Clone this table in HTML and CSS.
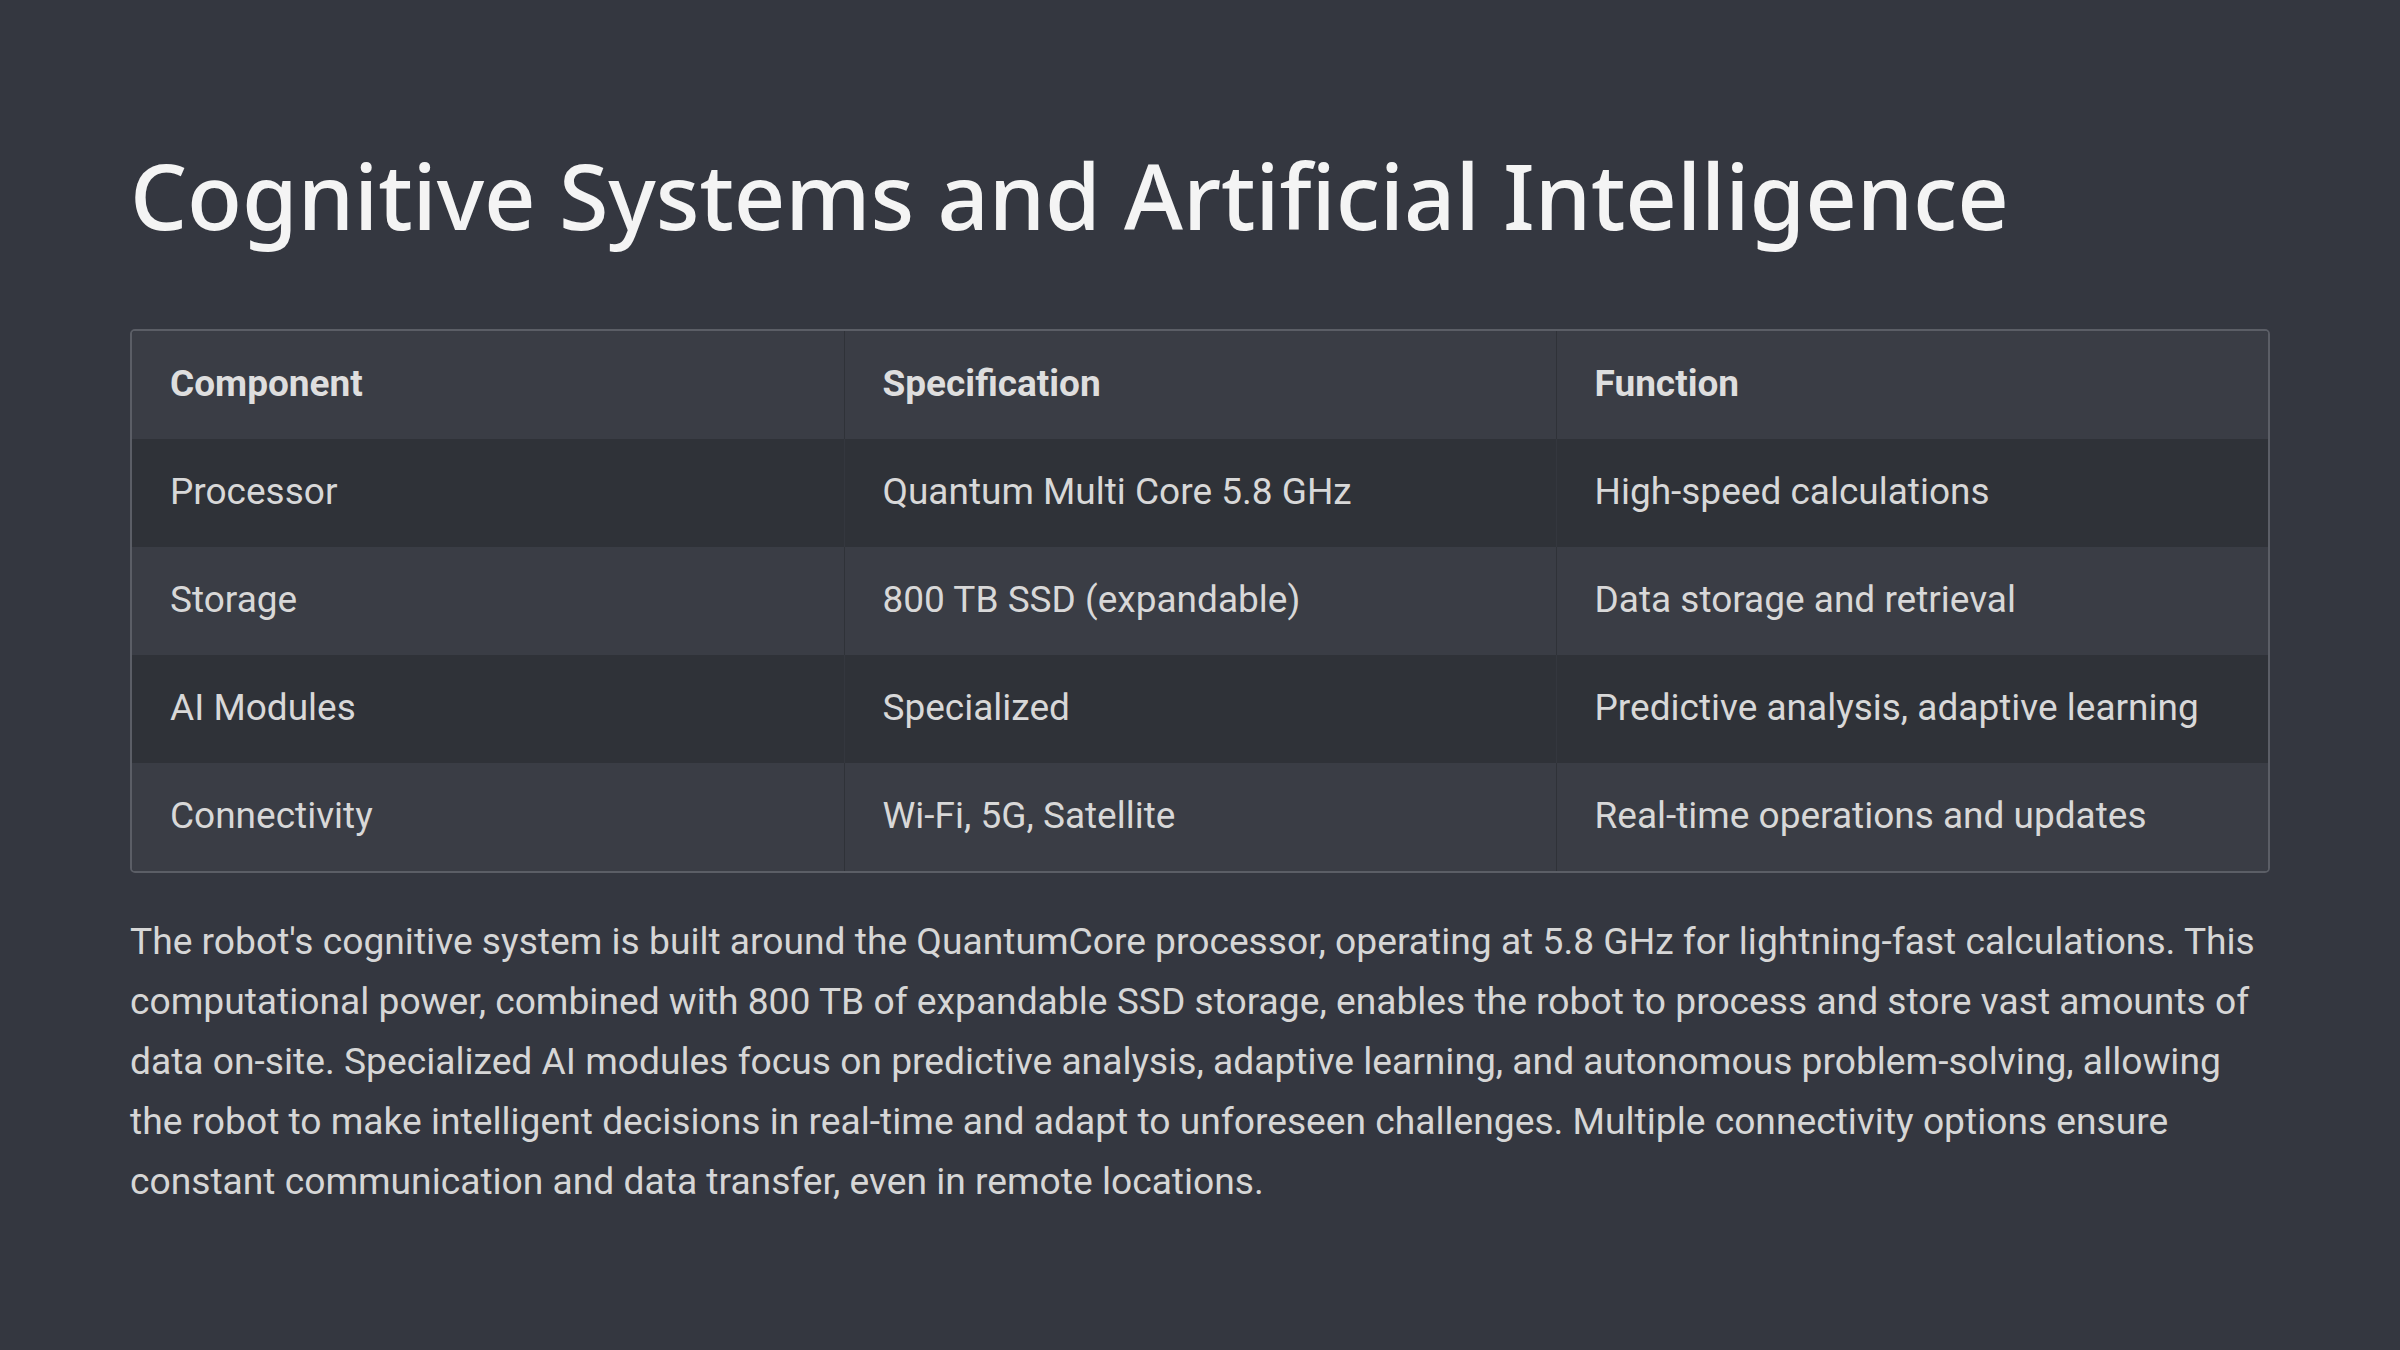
FILE: index.html
```html
<!DOCTYPE html>
<html lang="en">
<head>
<meta charset="utf-8">
<title>Cognitive Systems and Artificial Intelligence</title>
<link rel="stylesheet" href="styles.css">
</head>
<body>
<main class="slide">
  <h1 class="title">Cognitive Systems and Artificial Intelligence</h1>
  <div class="table-wrap">
    <table class="spec">
      <thead>
        <tr><th>Component</th><th>Specification</th><th>Function</th></tr>
      </thead>
      <tbody>
        <tr><td>Processor</td><td>Quantum Multi Core 5.8 GHz</td><td>High-speed calculations</td></tr>
        <tr><td>Storage</td><td>800 TB SSD (expandable)</td><td>Data storage and retrieval</td></tr>
        <tr><td>AI Modules</td><td>Specialized</td><td>Predictive analysis, adaptive learning</td></tr>
        <tr><td>Connectivity</td><td>Wi-Fi, 5G, Satellite</td><td>Real-time operations and updates</td></tr>
      </tbody>
    </table>
  </div>
  <p class="body-text">The robot's cognitive system is built around the QuantumCore processor, operating at 5.8 GHz for lightning-fast calculations. This computational power, combined with 800 TB of expandable SSD storage, enables the robot to process and store vast amounts of data on-site. Specialized AI modules focus on predictive analysis, adaptive learning, and autonomous problem-solving, allowing the robot to make intelligent decisions in real-time and adapt to unforeseen challenges. Multiple connectivity options ensure constant communication and data transfer, even in remote locations.</p>
</main>
</body>
</html>
```

FILE: styles.css
```css
html, body {
  margin: 0;
  padding: 0;
  background: #343740;
}
body {
  width: 2400px;
  height: 1350px;
  overflow: hidden;
  font-family: Roboto, "Liberation Sans", sans-serif;
}
.slide {
  padding: 141px 130px 0 130px;
}
.title {
  margin: 0;
  font-family: "Noto Sans", "Open Sans", sans-serif;
  font-weight: 500;
  font-size: 90px;
  line-height: 1.2;
  color: #f4f4f4;
  letter-spacing: -0.1px;
}
.table-wrap {
  margin-top: 80px;
  border: 2px solid #5b5e66;
  border-radius: 5px;
  overflow: hidden;
}
.spec {
  width: 100%;
  border-collapse: collapse;
  table-layout: fixed;
}
.spec th, .spec td {
  height: 104px;
  padding: 0 38px 4px 38px;
  text-align: left;
  font-size: 37px;
  color: #d8d8d8;
  border-left: 1px solid #2f3238;
}
.spec th:first-child, .spec td:first-child {
  border-left: none;
}
.spec th {
  font-weight: 700;
  color: #dedede;
}
.spec thead tr {
  background: #3a3d45;
}
.spec tbody tr:nth-child(odd) {
  background: #2f3238;
}
.spec tbody tr:nth-child(even) {
  background: #3a3d45;
}
.spec tbody tr:nth-child(odd) td {
  border-left-color: #34373e;
}
.body-text {
  margin: 38px 0 0 0;
  font-size: 37.2px;
  line-height: 60px;
  color: #d6d6d6;
}
```
